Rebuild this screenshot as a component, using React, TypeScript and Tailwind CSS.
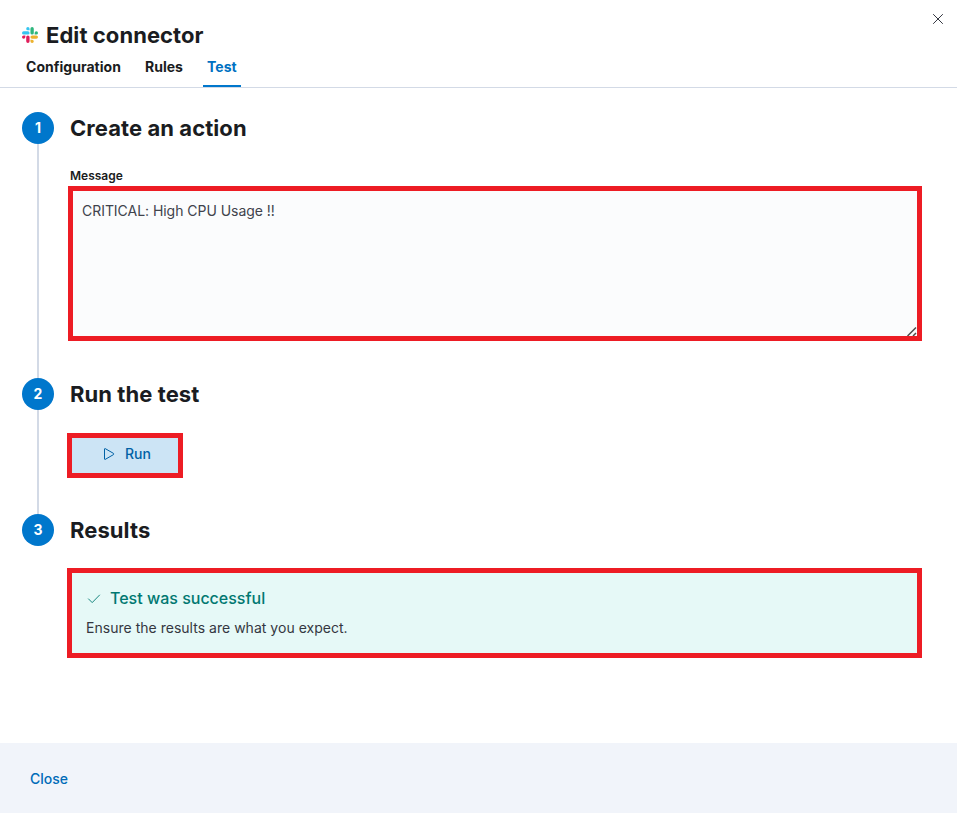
import * as React from "react";
import { clsx } from "clsx";

type Tab = "Configuration" | "Rules" | "Test";

const tabs: Tab[] = ["Configuration", "Rules", "Test"];

function SlackLogo() {
    return (
        <svg width="16" height="16" viewBox="0 0 24 24" aria-hidden="true">
            <path
                fill="#E01E5A"
                d="M5.042 15.165a2.528 2.528 0 0 1-2.52 2.523A2.528 2.528 0 0 1 0 15.165a2.527 2.527 0 0 1 2.522-2.52h2.52v2.52zM6.313 15.165a2.527 2.527 0 0 1 2.521-2.52 2.527 2.527 0 0 1 2.521 2.52v6.313A2.528 2.528 0 0 1 8.834 24a2.528 2.528 0 0 1-2.521-2.522v-6.313z"
            />
            <path
                fill="#36C5F0"
                d="M8.834 5.042a2.528 2.528 0 0 1-2.521-2.52A2.528 2.528 0 0 1 8.834 0a2.528 2.528 0 0 1 2.521 2.522v2.52H8.834zM8.834 6.313a2.528 2.528 0 0 1 2.521 2.521 2.528 2.528 0 0 1-2.521 2.521H2.522A2.528 2.528 0 0 1 0 8.834a2.528 2.528 0 0 1 2.522-2.521h6.312z"
            />
            <path
                fill="#2EB67D"
                d="M18.956 8.834a2.528 2.528 0 0 1 2.522-2.521A2.528 2.528 0 0 1 24 8.834a2.528 2.528 0 0 1-2.522 2.521h-2.522V8.834zM17.688 8.834a2.528 2.528 0 0 1-2.523 2.521 2.527 2.527 0 0 1-2.52-2.521V2.522A2.527 2.527 0 0 1 15.165 0a2.528 2.528 0 0 1 2.523 2.522v6.312z"
            />
            <path
                fill="#ECB22E"
                d="M15.165 18.956a2.528 2.528 0 0 1 2.523 2.522A2.528 2.528 0 0 1 15.165 24a2.527 2.527 0 0 1-2.52-2.522v-2.522h2.52zM15.165 17.688a2.527 2.527 0 0 1-2.52-2.523 2.526 2.526 0 0 1 2.52-2.52h6.313A2.527 2.527 0 0 1 24 15.165a2.528 2.528 0 0 1-2.522 2.523h-6.313z"
            />
        </svg>
    );
}

type StepProps = {
    number: number;
    title: string;
    last?: boolean;
    className?: string;
    children: React.ReactNode;
};

function Step({ number, title, last, className, children }: StepProps) {
    return (
        <li className={clsx("flex", className)}>
            {/* Number and the line down to the next step */}
            <div className="flex w-8 shrink-0 flex-col items-center">
                <span className="flex size-8 shrink-0 items-center justify-center rounded-full bg-[#0077cc] text-sm font-bold text-white">
                    {number}
                </span>
                {!last && <span className="w-0.5 grow bg-[#d3dae6]" />}
            </div>
            <div className="min-w-0 grow">
                <h2 className="pl-4 text-[22px] leading-8 font-bold tracking-[0.07px] text-[#1a1c21]">{title}</h2>
                {children}
            </div>
        </li>
    );
}

export default function App() {
    const [tab, setTab] = React.useState<Tab>("Test");

    return (
        <div className="flex h-[813px] w-full flex-col bg-white font-['Inter',sans-serif] text-sm text-[#343741]">
            <header className="flex h-[88px] shrink-0 flex-col border-b border-[#d3dae6] px-[22px]">
                <div className="flex justify-between">
                    <div className="mt-[19px] flex h-8 items-center gap-2">
                        <SlackLogo />
                        <h1 className="text-[22px] leading-8 font-bold tracking-[0.07px] text-[#1a1c21]">
                            Edit connector
                        </h1>
                    </div>
                    <button aria-label="Close dialog" className="mt-[11px] -mr-[11px] size-4">
                        <svg width="16" height="16" viewBox="0 0 16 16" fill="none" stroke="#343741">
                            <path d="M3.2 3.2l9.6 9.6M12.8 3.2l-9.6 9.6" />
                        </svg>
                    </button>
                </div>
                <div className="flex grow gap-4">
                    {tabs.map((name) => (
                        <button
                            key={name}
                            onClick={() => setTab(name)}
                            className={clsx(
                                "h-full border-b-2 px-1 pb-0.5 font-bold tracking-[0.03px]",
                                name === tab
                                    ? "border-[#0077cc] text-[#0071c2]"
                                    : "border-transparent text-[#1a1c21]"
                            )}
                        >
                            {name}
                        </button>
                    ))}
                </div>
            </header>

            <main className="grow pt-6 pr-[35px] pl-[22px]">
                <ol>
                    <Step number={1} title="Create an action" className="h-[266px]">
                        <label
                            htmlFor="message"
                            className="mt-[23px] mb-px block pl-4 text-xs leading-[18px] font-semibold text-[#1a1c21]"
                        >
                            Message
                        </label>
                        <div className="relative ml-3.5 h-[155px] border-5 border-[#ed1c24] bg-[#fbfcfd]">
                            <textarea
                                id="message"
                                defaultValue="CRITICAL: High CPU Usage !!"
                                className="block size-full resize-none px-[9px] py-[9px] text-sm leading-[21px] tracking-[-0.04px] text-[#40434c] outline-none"
                            />
                            {/* Resize handle */}
                            <svg
                                className="pointer-events-none absolute right-0 bottom-0"
                                width="10"
                                height="10"
                                viewBox="0 0 10 10"
                                fill="none"
                                stroke="#4b4b4b"
                                strokeWidth="1.5"
                            >
                                <path d="M0.5 10l8.5-8.5M6 10l3-3" />
                            </svg>
                        </div>
                    </Step>

                    <Step number={2} title="Run the test" className="h-[136px]">
                        <button className="mt-[23px] ml-[13px] flex h-[45px] w-[116px] items-center justify-center gap-2 border-5 border-[#ed1c24] bg-[#cce4f5] pb-[3px] pl-0.5 font-medium text-[#0061a6]">
                            <svg width="16" height="16" viewBox="0 0 16 16" fill="none" stroke="currentColor">
                                <path d="M3.5 3v10c0 .4.4.6.7.4l8.3-4.8c.5-.3.5-.9 0-1.2L4.2 2.6c-.3-.2-.7 0-.7.4z" />
                            </svg>
                            Run
                        </button>
                    </Step>

                    <Step number={3} title="Results" last>
                        <div className="mt-[22px] ml-[13px] h-[90px] border-5 border-[#ed1c24] bg-[#e6f9f7] px-3.5 pt-[13px]">
                            <div className="flex items-center gap-2 text-base leading-6 font-medium text-[#007871]">
                                <svg width="16" height="16" viewBox="0 0 16 16" fill="none" stroke="currentColor" strokeWidth="0.9">
                                    <path d="M2.2 8.6l4 4 7.6-7.8" />
                                </svg>
                                Test was successful
                            </div>
                            <p className="mt-[7px] leading-[21px] tracking-[0.02px]">
                                Ensure the results are what you expect.
                            </p>
                        </div>
                    </Step>
                </ol>
            </main>

            <footer className="flex h-[70px] shrink-0 items-center bg-[#f1f4fa] px-[30px] pt-0.5">
                <button className="font-medium text-[#006bb8]">Close</button>
            </footer>
        </div>
    );
}
